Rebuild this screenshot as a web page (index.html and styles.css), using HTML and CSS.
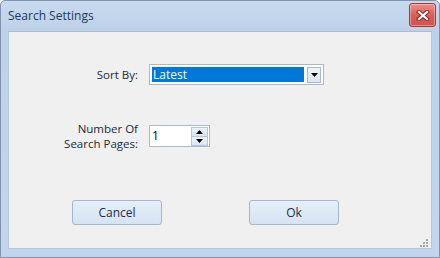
FILE: index.html
```html
<!DOCTYPE html>
<html>
<head>
<meta charset="utf-8">
<title>Search Settings</title>
<link rel="stylesheet" href="styles.css">
</head>
<body>
<div class="window">
  <div class="titlebar">
    <span class="title">Search Settings</span>
    <button class="close" aria-label="Close">
      <svg width="14" height="11" viewBox="0 0 14 11">
        <path d="M3 2 L11 9 M11 2 L3 9" stroke="#8a2a2a" stroke-width="4.2" stroke-linecap="square" fill="none"/>
        <path d="M3 2 L11 9 M11 2 L3 9" stroke="#ffffff" stroke-width="2.2" stroke-linecap="square" fill="none"/>
      </svg>
    </button>
  </div>
  <div class="content">
    <div class="form">
      <label class="label">Sort By:</label>
      <div class="combo">
        <div class="combo-value">Latest</div>
        <div class="combo-btn">
          <svg width="7" height="4" viewBox="0 0 7 4"><path d="M0 0 H7 L3.5 4 Z" fill="#000"/></svg>
        </div>
      </div>
      <label class="label two-line">Number Of<br>Search Pages:</label>
      <div class="spin">
        <div class="spin-value">1</div>
        <div class="spin-btns">
          <div class="spin-btn"><svg width="7" height="4" viewBox="0 0 7 4"><path d="M0 4 H7 L3.5 0 Z" fill="#000"/></svg></div>
          <div class="spin-btn"><svg width="7" height="4" viewBox="0 0 7 4"><path d="M0 0 H7 L3.5 4 Z" fill="#000"/></svg></div>
        </div>
      </div>
    </div>
    <div class="actions">
      <button class="btn">Cancel</button>
      <button class="btn">Ok</button>
    </div>
    <svg class="grip" width="9" height="9" viewBox="0 0 9 9">
      <g fill="#a8a8a8">
        <rect x="6" y="0" width="2" height="2"/>
        <rect x="3" y="3" width="2" height="2"/>
        <rect x="6" y="3" width="2" height="2"/>
        <rect x="0" y="6" width="2" height="2"/>
        <rect x="3" y="6" width="2" height="2"/>
        <rect x="6" y="6" width="2" height="2"/>
      </g>
    </svg>
  </div>
</div>
</body>
</html>
```

FILE: styles.css
```css
* { box-sizing: border-box; }
html, body { margin: 0; padding: 0; }
body {
  width: 440px;
  height: 258px;
  background: #ffffff;
  font-family: "Open Sans", "Noto Sans", "Liberation Sans", sans-serif;
  font-size: 11.5px;
}
.window {
  width: 440px;
  height: 258px;
  border: 1px solid #7f93ad;
  border-radius: 5px 5px 0 0;
  background: linear-gradient(#c8daee 0, #bdd1e9 30px, #c2d5ec 100%);
  display: flex;
  flex-direction: column;
}
.titlebar {
  height: 30px;
  display: flex;
  align-items: flex-start;
  justify-content: space-between;
  padding: 0 3px 0 7px;
}
.title {
  margin-top: 7px;
  color: #1e395b;
  font-size: 12px;
  line-height: 16px;
}
.close {
  margin-top: 2px;
  width: 27px;
  height: 24px;
  padding: 0;
  border: 1px solid #a13a37;
  border-radius: 3px;
  background: linear-gradient(#ef8f89, #dc5a54 55%, #d9534e);
  box-shadow: inset 0 0 0 1px rgba(255,255,255,0.35);
  display: flex;
  align-items: center;
  justify-content: center;
}
.close svg { display: block; }
.content {
  position: relative;
  margin: 0 7px 8px 7px;
  flex: 1;
  background: #f0f0f0;
  border: 1px solid #b6c7dc;
  border-top-color: #a9bcd4;
}
.form {
  display: grid;
  grid-template-columns: 129px 175px;
  column-gap: 11px;
  row-gap: 36px;
  align-items: center;
  padding-top: 32px;
}
.label {
  text-align: right;
  color: #202a3a;
  line-height: 15px;
}
.combo {
  height: 21px;
  border: 1px solid #abb9cc;
  background: #ffffff;
  display: flex;
  align-items: center;
  padding: 1px;
  gap: 3px;
}
.combo-value {
  flex: 1;
  height: 15px;
  margin-left: 1px;
  background: #0078d7;
  color: #ffffff;
  line-height: 15px;
  padding-left: 1px;
  font-size: 12px;
}
.combo-btn {
  width: 14px;
  height: 16px;
  border: 1px solid #a9b8cc;
  background: linear-gradient(#eef4fb, #dbe6f3);
  display: flex;
  align-items: center;
  justify-content: center;
  margin-right: 1px;
}
.combo-btn svg, .spin-btn svg { display: block; }
.spin {
  width: 61px;
  height: 22px;
  border: 1px solid #abb9cc;
  background: #ffffff;
  display: flex;
  align-items: center;
}
.spin-value {
  flex: 1;
  padding-left: 2px;
  font-size: 12px;
  line-height: 16px;
  color: #000;
}
.spin-btns {
  width: 17px;
  height: 19px;
  margin-right: 1px;
  display: flex;
  flex-direction: column;
}
.spin-btn {
  flex: 1;
  border: 1px solid #b8c6d8;
  background: linear-gradient(#eef4fb, #dae5f2);
  display: flex;
  align-items: center;
  justify-content: center;
}
.spin-btn + .spin-btn { border-top: none; }
.actions {
  display: flex;
  gap: 87px;
  padding-left: 63px;
  margin-top: 49px;
}
.btn {
  width: 90px;
  height: 25px;
  padding: 0;
  border: 1px solid #a5b7cf;
  border-radius: 3px;
  background: linear-gradient(#e6eff9, #d5e3f3);
  color: #1e2b4d;
  font-family: inherit;
  font-size: 12px;
}
.grip {
  position: absolute;
  right: 2px;
  bottom: 0px;
  display: block;
}
```
